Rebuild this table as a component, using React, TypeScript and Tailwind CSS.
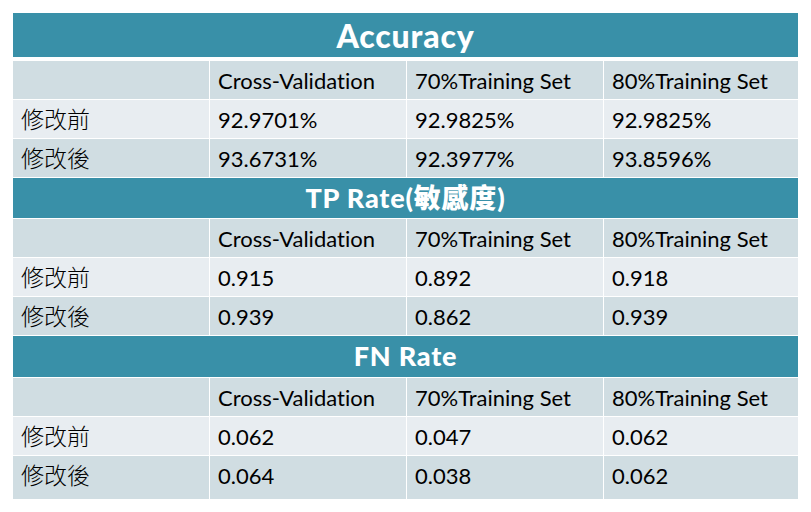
const columns = ["Cross-Validation", "70%Training Set", "80%Training Set"];

type Section = {
  title: string;
  titleClass: string;
  rows: { label: string; values: string[] }[];
};

const sections: Section[] = [
  {
    title: "Accuracy",
    titleClass: "h-[44px] text-[32px] mb-[3px] pt-[2px]",
    rows: [
      { label: "修改前", values: ["92.9701%", "92.9825%", "92.9825%"] },
      { label: "修改後", values: ["93.6731%", "92.3977%", "93.8596%"] },
    ],
  },
  {
    title: "TP Rate(敏感度)",
    titleClass: "h-[40px] text-[27px]",
    rows: [
      { label: "修改前", values: ["0.915", "0.892", "0.918"] },
      { label: "修改後", values: ["0.939", "0.862", "0.939"] },
    ],
  },
  {
    title: "FN Rate",
    titleClass: "h-[41px] text-[27px]",
    rows: [
      { label: "修改前", values: ["0.062", "0.047", "0.062"] },
      { label: "修改後", values: ["0.064", "0.038", "0.062"] },
    ],
  },
];

const font = "font-['Lato','Noto_Sans_CJK_TC',sans-serif] [font-variant-ligatures:none]";

const Cell = ({ children, className = "" }: { children?: React.ReactNode; className?: string }) => (
  <div className={`flex items-center pl-[8px] text-[22px] text-black ${className}`}>{children}</div>
);

const App = () => {
  return (
    <div className={`h-[512px] w-[811px] bg-white pl-[13px] pt-[13px] ${font}`}>
      <div className="grid w-[785px] grid-cols-[196px_196px_196px_194px] gap-px bg-white">
        {sections.map((s, si) => (
          <div key={s.title} className="contents">
            <div
              className={`col-span-4 flex items-center justify-center bg-[#3990a8] font-black tracking-[0.8px] text-white ${s.titleClass}`}
            >
              {s.title}
            </div>
            <Cell className="h-[38px] bg-[#d0dde2]" />
            {columns.map((c) => (
              <Cell key={c} className="h-[38px] bg-[#d0dde2]">
                {c}
              </Cell>
            ))}
            {s.rows.map((r, ri) => {
              const bg = ri === 0 ? "bg-[#e8edf1]" : "bg-[#d0dde2]";
              const h = si === 2 && ri === 1 ? "h-[43px] pb-[5px]" : "h-[38px]";
              return (
                <div key={r.label} className="contents">
                  <Cell className={`${bg} ${h} text-[23px] font-light`}>{r.label}</Cell>
                  {r.values.map((v, vi) => (
                    <Cell key={vi} className={`${bg} ${h}`}>
                      {v}
                    </Cell>
                  ))}
                </div>
              );
            })}
          </div>
        ))}
      </div>
    </div>
  );
};

export default App;
